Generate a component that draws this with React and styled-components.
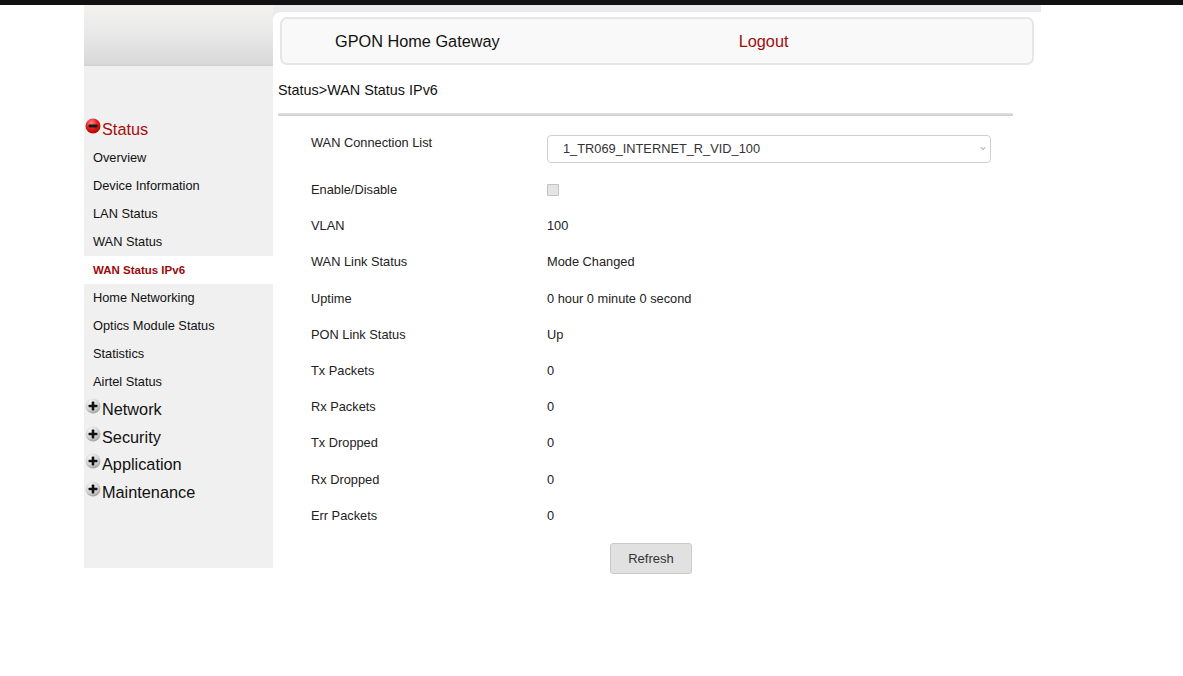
import React from "react";
import styled, { createGlobalStyle } from "styled-components";

const GlobalStyle = createGlobalStyle`
  body {
    margin: 0;
    background: #fff;
    font-family: "Liberation Sans", Arial, sans-serif;
    color: #222;
  }
`;

const TopBar = styled.div`
  height: 5px;
  background: #111114;
`;

const Page = styled.div`
  width: 956px;
  margin-left: 84px;
  display: grid;
  grid-template-columns: 189px 1fr;
`;

const LogoBlock = styled.div`
  height: 61px;
  background: linear-gradient(#f3f2f1 0%, #e9e9e9 45%, #d9d9d9 96%, #cfcfcf 100%);
`;

const HeaderRight = styled.div`
  background: #ebebeb;
  height: 61px;
`;

const HeaderInner = styled.div`
  margin-top: 7px;
  height: 54px;
  background: #fff;
  border-top-left-radius: 8px;
  padding: 5px 7px 0 7px;
  box-sizing: border-box;
`;

const HeaderBox = styled.div`
  height: 48px;
  box-sizing: border-box;
  border: 2px solid #e6e6e6;
  border-radius: 7px;
  background: #f9f9f9;
  display: flex;
  align-items: center;
  padding-left: 53px;
  gap: 239px;
  font-size: 16.3px;
`;

const Title = styled.span`
  color: #111;
`;

const Logout = styled.span`
  color: #a00d0d;
`;

const Sidebar = styled.nav`
  background: #f0f0f0;
  height: 502px;
  padding-top: 50px;
  box-sizing: border-box;
`;

const GroupHead = styled.div`
  height: 27.7px;
  display: flex;
  align-items: center;
  font-size: 16.3px;
  color: ${(p) => (p.$open ? "#a50d0d" : "#111")};
  padding-left: 1px;
`;

const IconWrap = styled.span`
  width: 17px;
  height: 16px;
  margin-top: -7px;
  display: inline-flex;
`;

const Item = styled.div`
  height: 28px;
  display: flex;
  align-items: center;
  padding-left: 9px;
  font-size: ${(p) => (p.$active ? "11.5px" : "12.8px")};
  font-weight: ${(p) => (p.$active ? 700 : 400)};
  color: ${(p) => (p.$active ? "#9a0b0b" : "#111")};
  background: ${(p) => (p.$active ? "#fff" : "transparent")};
`;

const Content = styled.main`
  padding: 0 28px 0 5px;
`;

const Crumb = styled.div`
  height: 47px;
  display: flex;
  align-items: center;
  font-size: 14.4px;
  color: #111;
`;

const Rule = styled.div`
  height: 3px;
  background: linear-gradient(#e4e4e4, #cdcdcd);
`;

const Form = styled.div`
  margin: 19px 22px 0 33px;
  display: grid;
  grid-template-columns: 236px 444px;
  font-size: 12.8px;
  color: #222;
`;

const Label = styled.div`
  height: ${(p) => (p.$first ? "37px" : "36.2px")};
  display: flex;
  align-items: ${(p) => (p.$first ? "flex-start" : "center")};
  line-height: 16px;
`;

const Value = styled(Label)``;

const SelectBox = styled.div`
  position: relative;
  width: 444px;
  height: 28px;
  box-sizing: border-box;
  border: 1px solid #cfcfcf;
  border-radius: 4px;
  background: #fff;
  display: flex;
  align-items: center;
  padding-left: 15px;
  font-size: 12.8px;
  color: #333;
`;

const Chevron = styled.span`
  position: absolute;
  right: 4px;
  top: 10px;
  display: flex;
`;

const Check = styled.span`
  width: 10px;
  height: 10px;
  border: 1px solid #c2c2c2;
  background: #e4e4e4;
  border-radius: 1px;
`;

const ButtonRow = styled.div`
  grid-column: 1 / -1;
  display: flex;
  justify-content: center;
  padding-top: 9px;
`;

const Button = styled.button`
  width: 82px;
  height: 31px;
  border: 1px solid #cacaca;
  border-radius: 3px;
  background: #e1e1e1;
  font-family: "Liberation Sans", Arial, sans-serif;
  font-size: 13px;
  color: #333;
`;

const MinusIcon = () => (
  <svg width="16" height="16" viewBox="0 0 16 16">
    <defs>
      <radialGradient id="rg" cx="0.4" cy="0.3" r="0.8">
        <stop offset="0" stopColor="#ff8a8a" />
        <stop offset="0.5" stopColor="#e01b1b" />
        <stop offset="1" stopColor="#a00000" />
      </radialGradient>
    </defs>
    <circle cx="8" cy="8" r="7.5" fill="url(#rg)" />
    <rect x="3.5" y="6.5" width="9" height="3" rx="1" fill="#1a1a1a" />
  </svg>
);

const PlusIcon = () => (
  <svg width="16" height="16" viewBox="0 0 16 16">
    <defs>
      <radialGradient id="gg" cx="0.4" cy="0.3" r="0.8">
        <stop offset="0" stopColor="#fafafa" />
        <stop offset="0.6" stopColor="#d0d0d0" />
        <stop offset="1" stopColor="#8d8d8d" />
      </radialGradient>
    </defs>
    <circle cx="8" cy="8" r="7.5" fill="url(#gg)" />
    <rect x="3.5" y="6.7" width="9" height="2.6" rx="0.8" fill="#111" />
    <rect x="6.7" y="3.5" width="2.6" height="9" rx="0.8" fill="#111" />
  </svg>
);

const statusItems = [
  "Overview",
  "Device Information",
  "LAN Status",
  "WAN Status",
  "WAN Status IPv6",
  "Home Networking",
  "Optics Module Status",
  "Statistics",
  "Airtel Status",
];

const groups = ["Network", "Security", "Application", "Maintenance"];

const rows = [
  ["VLAN", "100"],
  ["WAN Link Status", "Mode Changed"],
  ["Uptime", "0 hour 0 minute 0 second"],
  ["PON Link Status", "Up"],
  ["Tx Packets", "0"],
  ["Rx Packets", "0"],
  ["Tx Dropped", "0"],
  ["Rx Dropped", "0"],
  ["Err Packets", "0"],
];

export default function App() {
  return (
    <>
      <GlobalStyle />
      <TopBar />
      <Page>
        <LogoBlock />
        <HeaderRight>
          <HeaderInner>
            <HeaderBox>
              <Title>GPON Home Gateway</Title>
              <Logout>Logout</Logout>
            </HeaderBox>
          </HeaderInner>
        </HeaderRight>

        <Sidebar>
          <GroupHead $open>
            <IconWrap>
              <MinusIcon />
            </IconWrap>
            Status
          </GroupHead>
          {statusItems.map((it) => (
            <Item key={it} $active={it === "WAN Status IPv6"}>
              {it}
            </Item>
          ))}
          {groups.map((g) => (
            <GroupHead key={g}>
              <IconWrap>
                <PlusIcon />
              </IconWrap>
              {g}
            </GroupHead>
          ))}
        </Sidebar>

        <Content>
          <Crumb>Status&gt;WAN Status IPv6</Crumb>
          <Rule />
          <Form>
            <Label $first>WAN Connection List</Label>
            <Value $first>
              <SelectBox>
                1_TR069_INTERNET_R_VID_100
                <Chevron>
                  <svg width="6" height="5" viewBox="0 0 6 5">
                    <path d="M0.8 1.2 L3 3.6 L5.2 1.2" fill="none" stroke="#888" strokeWidth="0.9" />
                  </svg>
                </Chevron>
              </SelectBox>
            </Value>
            <Label>Enable/Disable</Label>
            <Value>
              <Check />
            </Value>
            {rows.map(([l, v]) => (
              <React.Fragment key={l}>
                <Label>{l}</Label>
                <Value>{v}</Value>
              </React.Fragment>
            ))}
            <ButtonRow>
              <Button>Refresh</Button>
            </ButtonRow>
          </Form>
        </Content>
      </Page>
    </>
  );
}
